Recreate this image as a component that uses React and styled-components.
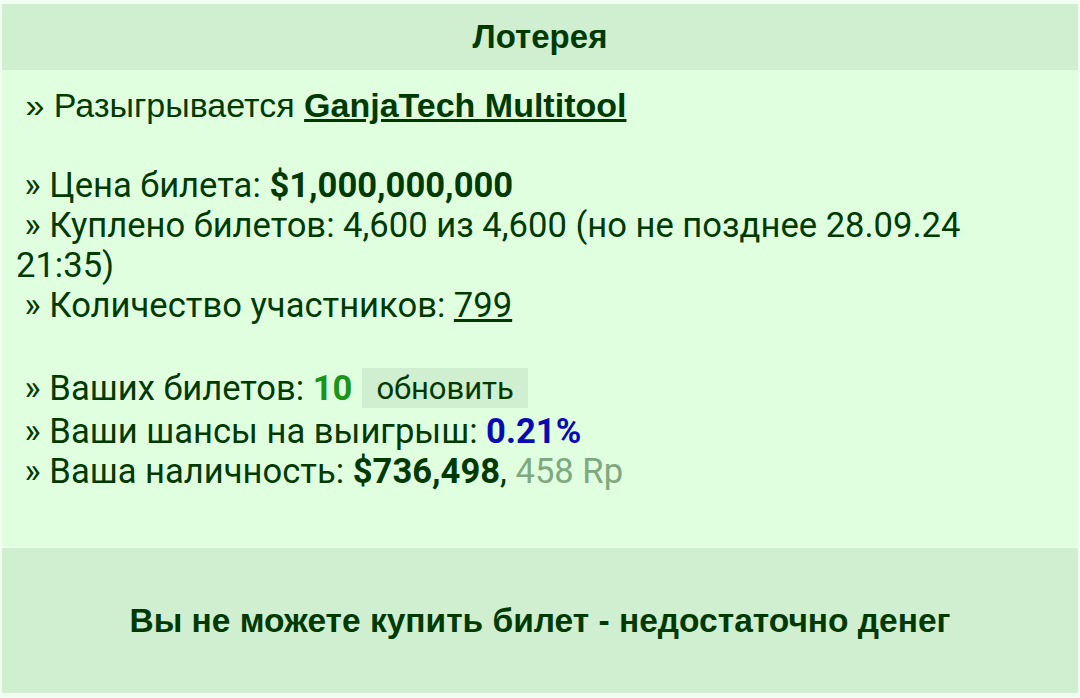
import React from 'react';
import styled, { createGlobalStyle } from 'styled-components';

const Global = createGlobalStyle`
  html, body {
    margin: 0;
    background: #f0fff0;
  }
  body {
    font-family: Roboto, "Liberation Sans", sans-serif;
    color: #003a00;
  }
`;

const arial = `"Liberation Sans", Arial, sans-serif`;

const Page = styled.div`
  padding: 4px 2px 5px 2px;
  display: flex;
  flex-direction: column;
`;

const Title = styled.div`
  height: 66px;
  background: #d0eed0;
  display: flex;
  align-items: center;
  justify-content: center;
  font-family: ${arial};
  font-weight: bold;
  font-size: 33px;
  color: #003a00;
`;

const Body = styled.div`
  background: #dfffdf;
  padding: 15px 14px 55px 14px;
  font-size: 34.6px;
  line-height: 40px;
  border-bottom: 2px solid #e8ffe8;
`;

const Line = styled.div`
  min-height: ${({ tall }) => (tall ? '46px' : '40px')};
  display: ${({ tall }) => (tall ? 'flex' : 'block')};
  align-items: center;
  white-space: pre-wrap;
`;

const Prize = styled(Line)`
  font-family: ${arial};
  font-size: 34px;
`;

const Gap = styled.div`
  height: 40px;
`;

const PrizeLink = styled.a`
  color: #003a00;
  font-weight: bold;
  text-decoration: underline;
`;

const Strong = styled.b`
  color: ${({ tone }) => tone || '#003a00'};
`;

const Plain = styled.a`
  color: #003a00;
  text-decoration: underline;
`;

const Muted = styled.span`
  color: #80a880;
`;

const Refresh = styled.button`
  margin-left: 10px;
  border: none;
  background: #d0eed0;
  color: #003a00;
  font-family: Roboto, sans-serif;
  font-size: 31px;
  height: 40px;
  padding: 0 14px;
  cursor: pointer;
`;

const Notice = styled.div`
  height: 145px;
  background: #d0eed0;
  display: flex;
  align-items: center;
  justify-content: center;
  font-family: ${arial};
  font-weight: bold;
  font-size: 33.5px;
  color: #003a00;
`;

export default function App() {
  return (
    <Page>
      <Global />
      <Title>Лотерея</Title>
      <Body>
        <Prize>
          {' » Разыгрывается '}
          <PrizeLink href="#">GanjaTech Multitool</PrizeLink>
        </Prize>
        <Gap />
        <Line>
          {' » Цена билета: '}
          <Strong>$1,000,000,000</Strong>
        </Line>
        <Line>{' » Куплено билетов: 4,600 из 4,600 (но не позднее 28.09.24 21:35)'}</Line>
        <Line>
          {' » Количество участников: '}
          <Plain href="#">799</Plain>
        </Line>
        <Gap />
        <Line tall>
          {' » Ваших билетов: '}
          <Strong tone="#1a941a">10</Strong>
          <Refresh>обновить</Refresh>
        </Line>
        <Line>
          {' » Ваши шансы на выигрыш: '}
          <Strong tone="#0a0ab4">0.21%</Strong>
        </Line>
        <Line>
          {' » Ваша наличность: '}
          <Strong>$736,498</Strong>, <Muted>458 Rp</Muted>
        </Line>
      </Body>
      <Notice>Вы не можете купить билет - недостаточно денег</Notice>
    </Page>
  );
}
